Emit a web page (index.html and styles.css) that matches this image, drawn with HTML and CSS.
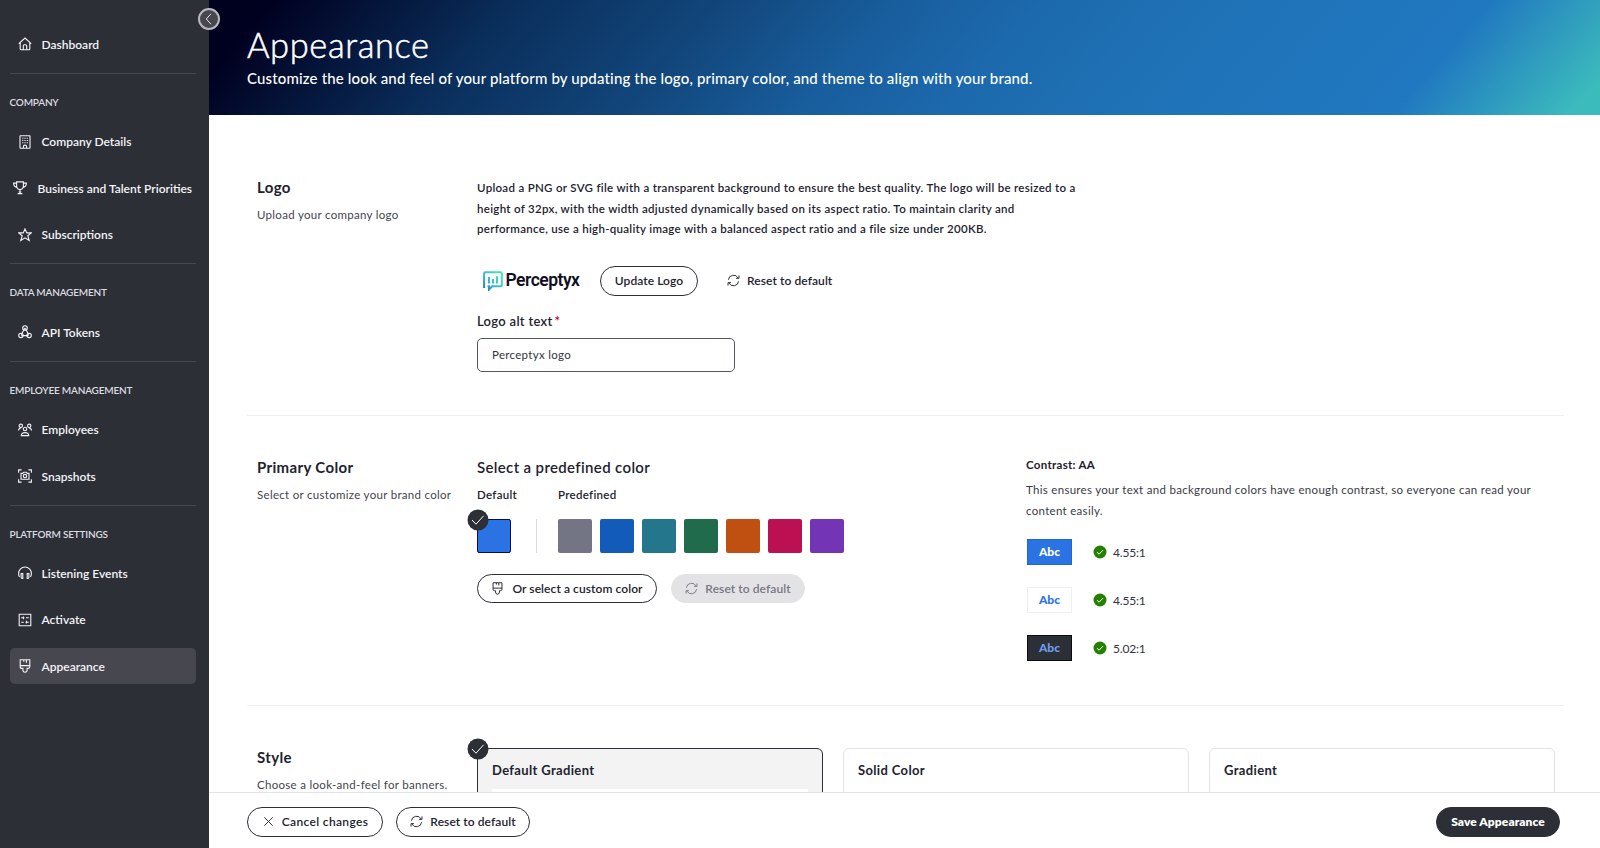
FILE: index.html
```html
<!DOCTYPE html>
<html lang="en">
<head>
    <meta charset="UTF-8">
    <meta name="viewport" content="width=device-width, initial-scale=1.0">
    <title>Appearance</title>
    <link rel="stylesheet" href="styles.css">
</head>
<body>
    <!-- shared icons -->
    <svg class="sprite" width="0" height="0">
        <symbol id="brush" viewBox="0 0 14 14">
            <path d="M2.2 .8h9.6v7q0 1.6-1.6 1.6H9.1v1.4q0 2.4-2.1 2.4t-2.1-2.4V9.4H3.8q-1.6 0-1.6-1.6zM2.2 6.6h9.6M5.8 1v1.8M8.4 1v2.8"/>
        </symbol>
        <symbol id="refresh" viewBox="0 0 14 14">
            <path d="M1.5 6.2A5.6 5.6 0 0 1 12 4.3M12.9 1.5v3.2H9.7M12.5 7.8A5.6 5.6 0 0 1 2 9.7M1.1 12.5V9.3h3.2"/>
        </symbol>
        <symbol id="check" viewBox="0 0 22 22">
            <circle cx="11" cy="11" r="10.5" fill="#2d2f37" stroke="none"/>
            <path d="M5 11l4 4.2 7.6-8.4" stroke="#fff"/>
        </symbol>
        <symbol id="valid" viewBox="0 0 14 14">
            <circle cx="7" cy="7" r="6.5" fill="#238000" stroke="none"/>
            <path d="M4 7.2l2.1 2 3.8-4" stroke="#fff"/>
        </symbol>
    </svg>

    <div class="app">
        <nav class="sidebar">
            <a class="nav-item">
                <svg class="nav-icon" viewBox="0 0 14 14"><path d="M.8 6.6L7 1l6.2 5.6M2.2 5.5v6.2q0 1 1 1h7.6q1 0 1-1V5.5M5.3 12.5V8.8q0-1 1-1h1.4q1 0 1 1v3.7"/></svg>
                Dashboard
            </a>
            <h2 class="nav-heading">COMPANY</h2>
            <a class="nav-item">
                <svg class="nav-icon" viewBox="0 0 14 14"><path d="M2.4 .8h9.2q.4 0 .4.4v11.6q0 .4-.4.4H2.4q-.4 0-.4-.4V1.2q0-.4.4-.4zM5.4 13v-1.6q0-1.3 1.6-1.3t1.6 1.3V13M4.2 3.2h1.2M6.4 3.2h1.2M8.7 3.2h1.2M4.2 5.5h1.2M6.4 5.5h1.2M8.7 5.5h1.2M4.2 7.8h1.2M6.4 7.8h1.2M8.7 7.8h1.2"/></svg>
                Company Details
            </a>
            <a class="nav-item nav-item-wide">
                <svg class="nav-icon" viewBox="0 0 14 14"><path d="M3.6 .9h6.8v3.8Q10.2 8.4 7 8.6 3.8 8.4 3.6 4.7zM3.6 2.1H.6q0 3.8 3.8 4.7M10.4 2.1h3q0 3.8-3.8 4.7M7 8.6v3.6M4.6 12.6h4.8M5.8 11h2.4"/></svg>
                Business and Talent Priorities
            </a>
            <a class="nav-item">
                <svg class="nav-icon" viewBox="0 0 14 14"><path d="M7 .9l1.8 4h4.5L9.8 7.7l1.4 4.8L7 9.8l-4.2 2.7 1.4-4.8L.7 4.9h4.5z"/></svg>
                Subscriptions
            </a>
            <h2 class="nav-heading">DATA MANAGEMENT</h2>
            <a class="nav-item">
                <svg class="nav-icon" viewBox="0 0 14 14"><circle cx="7" cy="3" r="2.3"/><circle cx="2.9" cy="10.4" r="2.2"/><circle cx="11.1" cy="10.4" r="2.2"/><path d="M7 3L3.2 9.8M7 3l3.8 6.8M3.3 10.6h7.4"/></svg>
                API Tokens
            </a>
            <h2 class="nav-heading">EMPLOYEE MANAGEMENT</h2>
            <a class="nav-item">
                <svg class="nav-icon" viewBox="0 0 14 14"><circle cx="7" cy="6" r="1.7"/><circle cx="2.8" cy="2.8" r="1.7"/><circle cx="11.2" cy="2.8" r="1.7"/><path d="M3.3 12.6q0-3 3.7-3t3.7 3zM.5 7.4q0-2 2.4-2.4M13.5 7.4q0-2-2.4-2.4"/></svg>
                Employees
            </a>
            <a class="nav-item">
                <svg class="nav-icon" viewBox="0 0 14 14"><path d="M.6 3.8V.9h3M10.4 .9h3v2.9M13.4 10.2v2.9h-3M3.6 13.1h-3v-2.9M3 4.4h1.8l.9-1.2h2.6l.9 1.2H11v5.8H3z"/><circle cx="7" cy="7.1" r="1.7"/></svg>
                Snapshots
            </a>
            <h2 class="nav-heading">PLATFORM SETTINGS</h2>
            <a class="nav-item">
                <svg class="nav-icon" viewBox="0 0 14 14"><path d="M1.6 10.8Q.6 9.8.6 7.4a6.4 6.4 0 0 1 12.8 0q0 2.4-1 3.4M3.1 7.6h1.7v4.8H3.9q-.8-.3-.8-1.2zM10.9 7.6H9.2v4.8h.9q.8-.3.8-1.2z"/></svg>
                Listening Events
            </a>
            <a class="nav-item">
                <svg class="nav-icon" viewBox="0 0 14 14"><path d="M1.2 1.2h11.6v11.6H1.2zM3.2 4.8h3.2M8 4.8h2.8M5.4 3.4v2.8M3.2 9.2h2.6M7.6 9.2h3.2M8.4 7.8v2.8"/></svg>
                Activate
            </a>
            <a class="nav-item active">
                <svg class="nav-icon"><use href="#brush"/></svg>
                Appearance
            </a>
            <button class="collapse">
                <svg viewBox="0 0 12 12"><path d="M8 .8L3.2 6 8 11.2"/></svg>
            </button>
        </nav>

        <div class="page">
            <header class="banner">
                <h1>Appearance</h1>
                <p>Customize the look and feel of your platform by updating the logo, primary color, and theme to align with your brand.</p>
            </header>

            <main class="content">
                <section class="section logo-section">
                    <div class="section-label">
                        <h3>Logo</h3>
                        <p>Upload your company logo</p>
                    </div>
                    <div class="section-body">
                        <p class="help">Upload a PNG or SVG file with a transparent background to ensure the best quality. The logo will be resized to a<br>height of 32px, with the width adjusted dynamically based on its aspect ratio. To maintain clarity and<br>performance, use a high-quality image with a balanced aspect ratio and a file size under 200KB.</p>
                        <div class="logo-row">
                            <div class="brand">
                                <svg class="brand-mark" viewBox="0 0 20 20">
                                    <defs>
                                        <linearGradient id="mark" gradientUnits="userSpaceOnUse" x1="1" y1="19" x2="17" y2="3">
                                            <stop offset="0" stop-color="#2272cc"/>
                                            <stop offset=".45" stop-color="#35b8d2"/>
                                            <stop offset="1" stop-color="#45e6b4"/>
                                        </linearGradient>
                                    </defs>
                                    <path d="M1.1 17V2.4Q1.1 1.2 2.3 1.2h15.3q1.2 0 1.2 1.2v11.7q0 1.2-1.2 1.2H9.2L6 18.6v-3.3H4.6" fill="none" stroke="url(#mark)" stroke-width="2"/>
                                    <path d="M5 6h2v6.5H5zM9 8h2v4.5H9zM13 5.3h2v7.2h-2z" fill="url(#mark)"/>
                                </svg>
                                <span>Perceptyx</span>
                            </div>
                            <button class="btn update">Update Logo</button>
                            <button class="btn plain"><svg class="btn-icon"><use href="#refresh"/></svg>Reset to default</button>
                        </div>
                        <label class="field-label" for="altText">Logo alt text<span class="required">*</span></label>
                        <input class="field" id="altText" type="text" value="Perceptyx logo">
                    </div>
                </section>

                <section class="section color-section">
                    <div class="section-label">
                        <h3>Primary Color</h3>
                        <p>Select or customize your brand color</p>
                    </div>
                    <div class="section-body">
                        <h3 class="picker-title">Select a predefined color</h3>
                        <div class="picker">
                            <div class="picker-default">
                                <h4>Default</h4>
                                <div class="swatch blue selected"><svg class="check"><use href="#check"/></svg></div>
                            </div>
                            <div class="picker-line"></div>
                            <div>
                                <h4>Predefined</h4>
                                <div class="swatches">
                                    <div class="swatch gray"></div>
                                    <div class="swatch navy"></div>
                                    <div class="swatch teal"></div>
                                    <div class="swatch green"></div>
                                    <div class="swatch orange"></div>
                                    <div class="swatch red"></div>
                                    <div class="swatch purple"></div>
                                </div>
                            </div>
                        </div>
                        <div class="picker-actions">
                            <button class="btn custom"><svg class="btn-icon"><use href="#brush"/></svg>Or select a custom color</button>
                            <button class="btn disabled"><svg class="btn-icon"><use href="#refresh"/></svg>Reset to default</button>
                        </div>
                    </div>
                    <div class="contrast">
                        <h4>Contrast: AA</h4>
                        <p>This ensures your text and background colors have enough contrast, so everyone can read your<br>content easily.</p>
                        <div class="ratio">
                            <span class="chip chip-blue">Abc</span>
                            <svg class="valid"><use href="#valid"/></svg>
                            <span>4.55:1</span>
                        </div>
                        <div class="ratio">
                            <span class="chip chip-white">Abc</span>
                            <svg class="valid"><use href="#valid"/></svg>
                            <span>4.55:1</span>
                        </div>
                        <div class="ratio">
                            <span class="chip chip-dark">Abc</span>
                            <svg class="valid"><use href="#valid"/></svg>
                            <span>5.02:1</span>
                        </div>
                    </div>
                </section>

                <section class="section style-section">
                    <div class="section-label">
                        <h3>Style</h3>
                        <p>Choose a look-and-feel for banners.</p>
                    </div>
                    <div class="cards">
                        <div class="card selected">
                            <svg class="check"><use href="#check"/></svg>
                            <h4>Default Gradient</h4>
                            <div class="preview"></div>
                        </div>
                        <div class="card">
                            <h4>Solid Color</h4>
                            <div class="preview"></div>
                        </div>
                        <div class="card">
                            <h4>Gradient</h4>
                            <div class="preview"></div>
                        </div>
                    </div>
                </section>
            </main>

            <footer class="actions">
                <button class="btn cancel"><svg class="btn-icon" viewBox="0 0 14 14"><path d="M2.5 2.5l9 9M11.5 2.5l-9 9"/></svg>Cancel changes</button>
                <button class="btn reset"><svg class="btn-icon"><use href="#refresh"/></svg>Reset to default</button>
                <button class="btn save">Save Appearance</button>
            </footer>
        </div>
    </div>
</body>
</html>
```
FILE: styles.css
```css
* {
    box-sizing: border-box;
}
body {
    margin: 0;
    font-family: Lato, "Open Sans", sans-serif;
    font-size: 11.5px;
    letter-spacing: 0.3px;
    color: #22222f;
    background: #fff;
}
h1, h2, h3, h4, p {
    margin: 0;
}
button {
    font-family: inherit;
    padding: 0;
}
svg {
    fill: none;
    stroke: currentColor;
    display: block;
    flex: none;
}
.sprite {
    position: absolute;
}
.app {
    display: flex;
    height: 100vh;
    overflow: hidden;
}

/* sidebar */
.sidebar {
    position: relative;
    flex: none;
    width: 209px;
    padding: 26.4px 13px 0 9.5px;
    background: #2d2f37;
    color: #f4f4f6;
}
.nav-item {
    display: flex;
    align-items: center;
    height: 36px;
    margin-bottom: 10.5px;
    padding-left: 8.5px;
    gap: 9.5px;
    border-radius: 5px;
    font-size: 12px;
    font-weight: 600;
    letter-spacing: 0;
    white-space: nowrap;
}
.nav-item-wide {
    padding-left: 3.5px;
    gap: 10.5px;
}
.nav-item.active {
    background: #47474f;
}
.nav-icon {
    width: 14px;
    height: 14px;
    stroke-width: 1.1;
}
.nav-heading {
    height: 50.9px;
    padding-top: 20px;
    border-top: 1.5px solid #47474f;
    color: #dcdce0;
    font-size: 10px;
    font-weight: 600;
    letter-spacing: -0.2px;
    line-height: 17px;
}
.collapse {
    position: absolute;
    top: 8px;
    right: -11px;
    display: flex;
    align-items: center;
    justify-content: center;
    width: 22px;
    height: 22px;
    border: 2px solid #b9b9bd;
    border-radius: 50%;
    background: #47474f;
    color: #e4e4e8;
}
.collapse svg {
    width: 12px;
    height: 12px;
}

/* banner */
.page {
    flex: 1;
    display: flex;
    flex-direction: column;
    min-width: 0;
}
.banner {
    flex: none;
    height: 115px;
    padding: 24px 38px 0;
    color: #fff;
    background: linear-gradient(131deg, #00001f 4%, #0a2f5c 21%, #12477c 35%, #185d9c 46%, #1c69ad 56%, #1f72b6 68%, #2078c0 86%, #3cbbbd 98%);
}
.banner h1 {
    font-size: 34.5px;
    font-weight: 300;
    letter-spacing: 0.6px;
    line-height: 41px;
    -webkit-text-stroke: 0.5px #fff;
}
.banner p {
    font-size: 15px;
    font-weight: 500;
    letter-spacing: 0.15px;
    line-height: 26px;
    white-space: nowrap;
}

/* sections */
.content {
    flex: 1;
    min-height: 0;
    padding: 21px 36px 0 38px;
    overflow: hidden;
}
.section {
    display: grid;
    grid-template-columns: 220px 1fr;
    padding: 42px 9px 0 10px;
    border-bottom: 1px solid #efeff1;
}
.section h3 {
    font-size: 15px;
    font-weight: 700;
    letter-spacing: 0.35px;
    line-height: 19px;
}
.section-label p {
    margin-top: 9px;
    color: #44444f;
    line-height: 18px;
    white-space: nowrap;
}
.logo-section {
    height: 280px;
}
.color-section {
    grid-template-columns: 220px 549px 1fr;
    height: 290px;
}
.help {
    font-weight: 600;
    line-height: 20.5px;
    white-space: nowrap;
}
.logo-row {
    display: flex;
    align-items: center;
    height: 30px;
    margin-top: 26px;
}
.brand {
    display: flex;
    width: 123px;
    padding-left: 6px;
    gap: 2.5px;
    color: #10101f;
    font-family: Roboto, sans-serif;
    font-size: 17.5px;
    font-weight: 600;
    letter-spacing: -0.5px;
    line-height: 18px;
}
.brand-mark {
    width: 20px;
    height: 20px;
    stroke: none;
}

/* buttons */
.btn {
    display: flex;
    align-items: center;
    justify-content: center;
    gap: 7px;
    height: 30px;
    border: 1px solid #2d2f37;
    border-radius: 15px;
    background: #fff;
    color: #22222f;
    font-size: 12px;
    font-weight: 600;
    letter-spacing: 0.08px;
    white-space: nowrap;
}
.btn-icon {
    width: 13px;
    height: 13px;
}
.btn.update {
    width: 98px;
}
.btn.plain {
    margin-left: 28px;
    border-color: transparent;
}
.btn.custom {
    width: 180px;
}
.btn.disabled {
    width: 134px;
    border-color: #e3e3e5;
    background: #e3e3e5;
    color: #777786;
}
.btn.cancel {
    width: 136px;
    letter-spacing: 0.35px;
}
.btn.reset {
    width: 134px;
}
.btn.save {
    width: 124px;
    margin-left: auto;
    background: #2d2f37;
    color: #fff;
    font-weight: 800;
}

/* fields */
.field-label {
    display: block;
    margin-top: 15px;
    font-size: 13px;
    font-weight: 600;
    line-height: 20px;
}
.required {
    margin-left: 2px;
    color: #b8001c;
}
.field {
    display: block;
    width: 258px;
    height: 34px;
    margin-top: 7px;
    padding: 0 14px;
    border: 1px solid #55556a;
    border-radius: 5px;
    color: #33333f;
    font: inherit;
    letter-spacing: inherit;
}

/* color picker */
.section .picker-title {
    font-weight: 600;
}
.picker {
    display: flex;
    margin-top: 8px;
}
.picker h4, .contrast h4 {
    font-size: 11.5px;
    font-weight: 600;
    line-height: 20px;
}
.picker-default {
    width: 59px;
}
.picker-line {
    align-self: flex-end;
    width: 1px;
    height: 34px;
    margin-right: 21px;
    background: #dcdce0;
}
.swatches {
    display: flex;
    gap: 8px;
}
.swatch {
    position: relative;
    width: 34px;
    height: 34px;
    margin-top: 14px;
    border-radius: 2px;
}
.blue {
    border: 1px solid #0a0a50;
    background: #2b72e2;
}
.gray {
    background: #737484;
}
.navy {
    background: #125bb9;
}
.teal {
    background: #23768c;
}
.green {
    background: #206b4b;
}
.orange {
    background: #c05012;
}
.red {
    background: #bb1052;
}
.purple {
    background: #7434b6;
}
.check {
    position: absolute;
    top: -11px;
    left: -11px;
    width: 22px;
    height: 22px;
}
.picker-actions {
    display: flex;
    gap: 14px;
    margin-top: 21px;
}
.picker-actions .btn {
    height: 29px;
}
.btn.custom {
    gap: 8px;
}

/* contrast */
.contrast h4 {
    margin-top: -3px;
    font-weight: 700;
}
.contrast p {
    margin: 5px 0 18px;
    color: #3a3a46;
    line-height: 20.5px;
    white-space: nowrap;
}
.ratio {
    display: flex;
    align-items: center;
    height: 26px;
    margin-bottom: 22px;
    color: #33333f;
    font-size: 12px;
    letter-spacing: -0.2px;
}
.chip {
    width: 45px;
    margin-left: 1px;
    border: 1px solid;
    font-size: 12px;
    font-weight: 900;
    letter-spacing: 0;
    line-height: 24px;
    text-align: center;
}
.chip-blue {
    border-color: #1f66dc;
    background: #2b72e2;
    color: #fff;
}
.chip-white {
    border-color: #f0f0f2;
    color: #2b72e2;
}
.chip-dark {
    border-color: #0c0d14;
    background: #2d2f37;
    color: #6d9cee;
}
.valid {
    width: 14px;
    height: 14px;
    margin: 0 6px 0 21px;
}

/* style cards */
.style-section {
    border-bottom: 0;
}
.cards {
    display: grid;
    grid-template-columns: repeat(3, 1fr);
    gap: 20px;
}
.card {
    position: relative;
    height: 160px;
    padding: 11px 14px;
    border: 1px solid #e3e3e5;
    border-radius: 6px;
}
.card.selected {
    border-color: #2d2f37;
    background: #f3f3f3;
}
.card h4 {
    font-size: 13px;
    font-weight: 700;
    letter-spacing: 0.35px;
    line-height: 20px;
}
.preview {
    height: 90px;
    margin-top: 9px;
    background: #fff;
}

/* footer */
.actions {
    flex: none;
    display: flex;
    align-items: center;
    gap: 13px;
    height: 56px;
    padding: 2px 40px 0 38px;
    border-top: 1px solid #e3e3e5;
    background: #fff;
}
```
